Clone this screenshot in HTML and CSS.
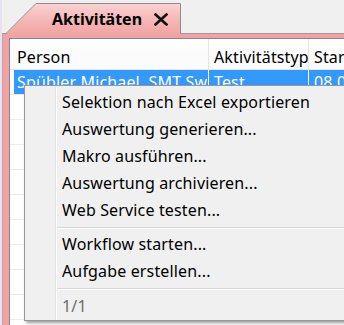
FILE: index.html
```html
<!DOCTYPE html>
<html>
	<head>
		<meta charset="utf-8">
		<title>Aktivitäten</title>
		<link rel="stylesheet" href="styles.css">
	</head>
	<body>
		<div class="app">
			<div class="tabbar">
				<div class="tab">
					<svg class="tab-shape" width="176" height="32" viewBox="0 0 176 32">
						<defs>
							<linearGradient id="tabfill" x1="0" y1="0" x2="0" y2="1">
								<stop offset="0" stop-color="#fbd3d3"/>
								<stop offset="0.5" stop-color="#f6b8b8"/>
								<stop offset="1" stop-color="#f2a2a2"/>
							</linearGradient>
						</defs>
						<polygon points="0,32 31,0.5 175.5,0.5 175.5,32" fill="url(#tabfill)"/>
						<polyline points="0,31.5 31,0.5 175.5,0.5 175.5,31" fill="none" stroke="#8e8e8e" stroke-width="1"/>
					</svg>
					<span class="tab-title">Aktivitäten</span>
					<svg class="tab-close" width="14" height="13" viewBox="0 0 14 13">
						<path d="M1.5 1.5 L12.5 11.5 M12.5 1.5 L1.5 11.5" stroke="#111" stroke-width="2.6" stroke-linecap="square"/>
					</svg>
				</div>
			</div>
			<div class="panel">
				<div class="grid">
					<div class="row head">
						<div class="cell c1">Person</div>
						<div class="cell c2">Aktivitätstyp</div>
						<div class="cell c3">Start</div>
					</div>
					<div class="row sel">
						<div class="cell c1">Spübler Michael, SMT Swiss</div>
						<div class="cell c2">Test</div>
						<div class="cell c3">08.03.2019</div>
					</div>
					<div class="row"><div class="cell c1"></div><div class="cell c2"></div><div class="cell c3"></div></div>
					<div class="row"><div class="cell c1"></div><div class="cell c2"></div><div class="cell c3"></div></div>
					<div class="row"><div class="cell c1"></div><div class="cell c2"></div><div class="cell c3"></div></div>
					<div class="row"><div class="cell c1"></div><div class="cell c2"></div><div class="cell c3"></div></div>
					<div class="row"><div class="cell c1"></div><div class="cell c2"></div><div class="cell c3"></div></div>
					<div class="row"><div class="cell c1"></div><div class="cell c2"></div><div class="cell c3"></div></div>
					<div class="row"><div class="cell c1"></div><div class="cell c2"></div><div class="cell c3"></div></div>
					<div class="row"><div class="cell c1"></div><div class="cell c2"></div><div class="cell c3"></div></div>
					<div class="row"><div class="cell c1"></div><div class="cell c2"></div><div class="cell c3"></div></div>
				</div>
			</div>
			<div class="menu">
				<div class="item">Selektion nach Excel exportieren</div>
				<div class="item">Auswertung generieren...</div>
				<div class="item">Makro ausführen...</div>
				<div class="item">Auswertung archivieren...</div>
				<div class="item">Web Service testen...</div>
				<div class="sep"></div>
				<div class="item">Workflow starten...</div>
				<div class="item">Aufgabe erstellen...</div>
				<div class="sep"></div>
				<div class="item off">1/1</div>
			</div>
		</div>
	</body>
</html>
```
FILE: styles.css
```css
*{
	margin: 0;
	padding: 0;
	box-sizing: border-box;
}
body{
	background: #f0f0f0;
	font-family: "Noto Sans", "Open Sans", sans-serif;
	font-size: 16px;
	letter-spacing: 0.15px;
	color: #000;
}
.app{
	position: relative;
	width: 344px;
	height: 325px;
	overflow: hidden;
	display: flex;
	flex-direction: column;
	border-left: 2px solid #e3e3f3;
}
.tabbar{
	height: 34px;
	flex: none;
	display: flex;
	align-items: flex-end;
	background: #f0f0f0;
	box-shadow: inset 0 -1px #9a9a9a;
	padding-left: 3px;
}
.tab{
	position: relative;
	width: 176px;
	height: 31px;
	display: flex;
	align-items: center;
	padding: 1px 0 0 47px;
}
.tab-shape{
	position: absolute;
	left: 0;
	top: 0;
}
.tab-title{
	position: relative;
	font-weight: bold;
	font-size: 16px;
	letter-spacing: 0;
}
.tab-close{
	position: relative;
	margin-left: 12px;
	margin-top: 1px;
}
.panel{
	flex: 1;
	background: #f2a2a2;
	border-left: 1px solid #c4a4ac;
	padding: 4px 0 0 6px;
	overflow: hidden;
}
.grid{
	width: 420px;
	height: 320px;
	background: #fff;
	border-top: 1px solid #828790;
	border-left: 1px solid #828790;
}
.row{
	display: flex;
	height: 25px;
	border-bottom: 1px solid #ececec;
}
.cell{
	white-space: nowrap;
	overflow: hidden;
	line-height: 24px;
	padding-left: 5px;
	border-right: 1px solid #fff;
}
.c1{
	width: 199px;
	padding-left: 7px;
}
.c2{
	width: 100px;
}
.c3{
	width: 110px;
}
.head{
	height: 31px;
	border-bottom: 1px solid #e5e5e5;
	background: linear-gradient(#fff 0, #fff 8px, #fcfcfc 9px, #fafafa);
}
.head .cell{
	border-right: 1px solid #e5e5e5;
	padding-top: 6px;
}
.sel .cell{
	background: #3399ff;
	color: #fff;
}
.sel .c1{
	margin-left: 4px;
	width: 195px;
	padding-left: 3px;
}
.menu{
	position: absolute;
	left: 22px;
	top: 85px;
	width: 340px;
	height: 236px;
	background: #f0f0f0 linear-gradient(to right, transparent 30px, #e2e3e3 30px, #e2e3e3 31px, #fff 31px, #fff 32px, transparent 32px);
	border: 1px solid #979797;
	box-shadow: 2px 2px 3px rgba(0, 0, 0, 0.4);
	padding: 3px 2px 1px 0;
}
.item{
	height: 27px;
	line-height: 27px;
	padding-left: 37px;
	white-space: nowrap;
}
.item.off{
	color: #6d6d6d;
	line-height: 29px;
}
.sep{
	height: 7px;
	margin-left: 32px;
	border-top: 3px solid transparent;
	background: linear-gradient(#d7d7d7 0, #d7d7d7 1px, #fff 1px, #fff 2px, transparent 2px);
	background-clip: content-box;
}
```
